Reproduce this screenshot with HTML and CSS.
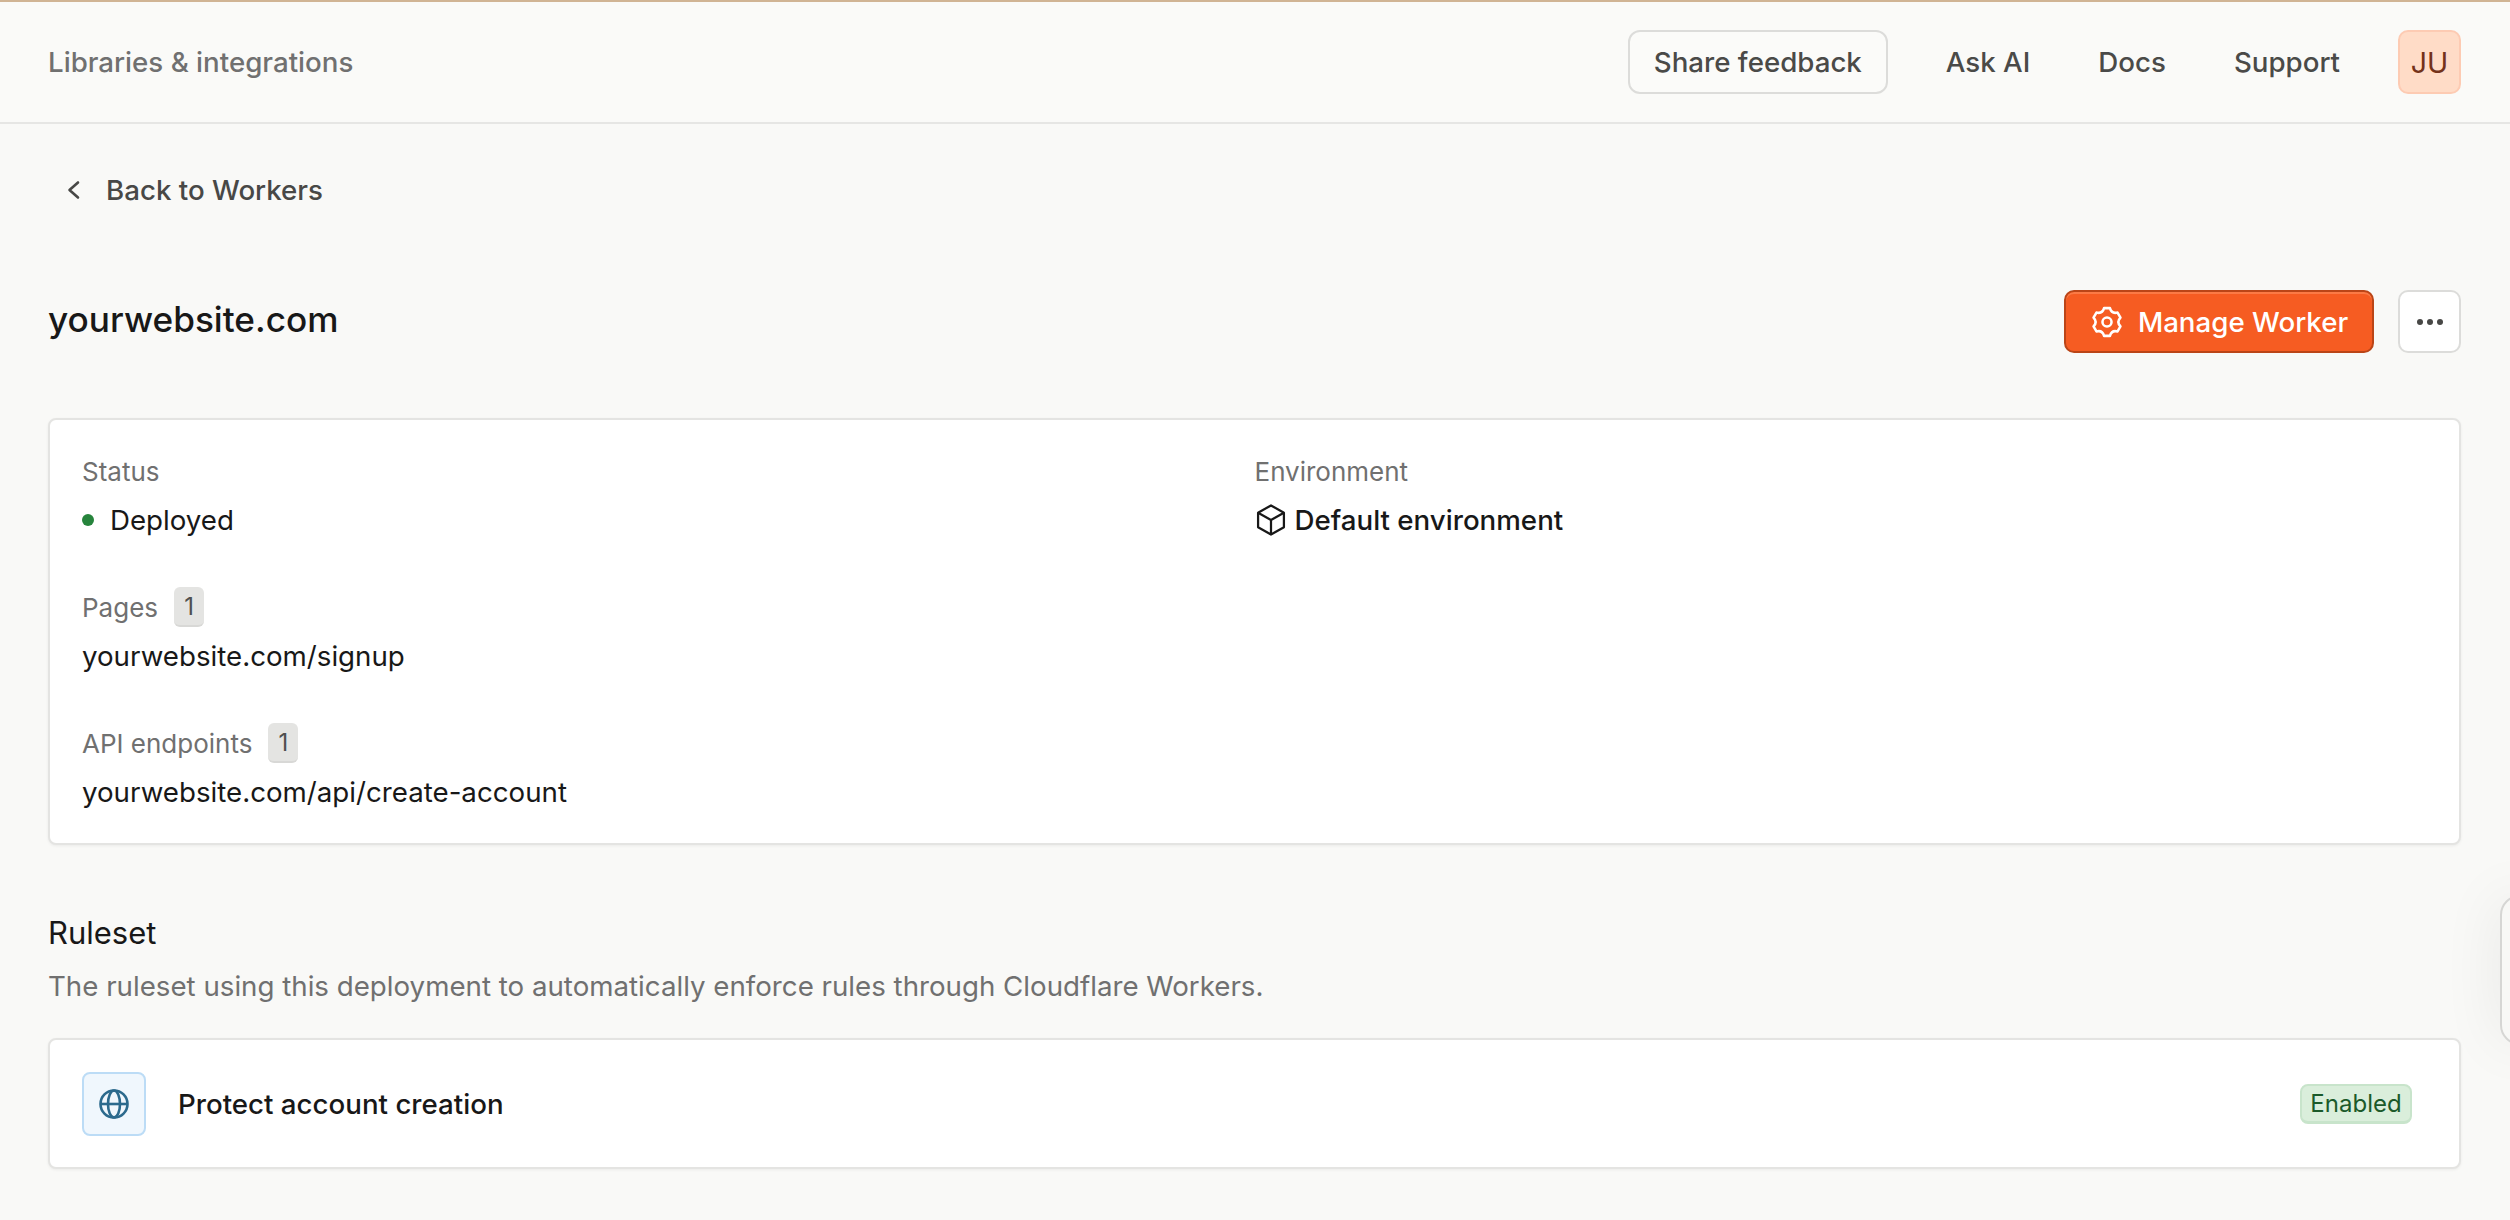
FILE: index.html
```html
<!DOCTYPE html>
<html lang="en">
<head>
<meta charset="utf-8">
<title>yourwebsite.com</title>
<link rel="stylesheet" href="styles.css">
</head>
<body>
<div class="topline"></div>
<header class="topbar">
  <div class="crumb">Libraries &amp; integrations</div>
  <nav class="topnav">
    <button class="feedback">Share feedback</button>
    <a class="navlink">Ask AI</a>
    <a class="navlink">Docs</a>
    <a class="navlink">Support</a>
    <div class="avatar">JU</div>
  </nav>
</header>
<main class="page">
  <a class="back">
    <svg class="back-icon" viewBox="0 0 24 24"><path d="M16 4.5 7.5 12l8.5 7.5"/></svg>
    <span>Back to Workers</span>
  </a>
  <div class="title-row">
    <h1 class="title">yourwebsite.com</h1>
    <div class="actions">
      <button class="primary">
        <svg class="gear" viewBox="0 0 24 24"><path d="M9.92 2.22H14.08Q15.25 6.37 19.43 5.31L21.51 8.91Q18.5 12 21.51 15.09L19.43 18.69Q15.25 17.63 14.08 21.78H9.92Q8.75 17.63 4.57 18.69L2.49 15.09Q5.5 12 2.49 8.91L4.57 5.31Q8.75 6.37 9.92 2.22Z"/><circle cx="12" cy="12" r="3.2"/></svg>
        <span>Manage Worker</span>
      </button>
      <button class="more" aria-label="More"><i></i><i></i><i></i></button>
    </div>
  </div>
  <section class="card details">
    <div class="field">
      <div class="label">Status</div>
      <div class="value"><i class="dot"></i>Deployed</div>
    </div>
    <div class="field">
      <div class="label">Environment</div>
      <div class="value env">
        <svg class="cube" viewBox="26 14 204 228"><path d="M128 24 220 76V180L128 232 36 180V76Z"/><path d="M36 76 128 128 220 76M128 128V232"/></svg>
        Default environment
      </div>
    </div>
    <div class="field full">
      <div class="label">Pages <span class="count">1</span></div>
      <div class="value">yourwebsite.com/signup</div>
    </div>
    <div class="field full">
      <div class="label">API endpoints <span class="count">1</span></div>
      <div class="value">yourwebsite.com/api/create-account</div>
    </div>
  </section>
  <h2 class="section-title">Ruleset</h2>
  <p class="section-desc">The ruleset using this deployment to automatically enforce rules through Cloudflare Workers.</p>
  <section class="card rule">
    <div class="rule-icon">
      <svg viewBox="0 0 32 32"><circle cx="16" cy="16" r="13.5"/><ellipse cx="16" cy="16" rx="6" ry="13.5"/><path d="M2.5 16h27"/></svg>
    </div>
    <div class="rule-name">Protect account creation</div>
    <span class="enabled">Enabled</span>
  </section>
</main>
<div class="widget"></div>
</body>
</html>
```
FILE: styles.css
```css
* { box-sizing: border-box; }
html, body { margin: 0; height: 100%; }
body {
  background: #f9f9f7;
  font-family: Inter, "Liberation Sans", sans-serif;
  font-size: 27.7px;
  color: #181818;
  overflow: hidden;
  position: relative;
}
.topline { height: 2px; background: #d0b494; }
.topbar {
  height: 122px;
  padding: 0 49px 0 48px;
  display: flex;
  align-items: center;
  justify-content: space-between;
  background: #fafaf8;
  border-bottom: 2px solid #e6e6e4;
}
.crumb { color: #707070; font-weight: 450; }
.topnav { display: flex; align-items: center; color: #4a4a48; font-weight: 450; }
.feedback {
  height: 64px;
  width: 260px;
  margin-right: 24px;
  border: 2px solid #dcdcda;
  border-radius: 12px;
  background: #fbfbf9;
  font: inherit;
  color: inherit;
}
.navlink { padding: 0 34px; }
.avatar {
  width: 63px;
  height: 64px;
  margin-left: 24px;
  display: flex;
  align-items: center;
  justify-content: center;
  border: 2px solid #fdcbb3;
  border-radius: 10px;
  background: #ffdcc7;
  color: #74321a;
  font-size: 28.5px;
  font-weight: 400;
}
.page { padding: 0 49px 0 48px; }
.back {
  display: flex;
  align-items: center;
  height: 48px;
  margin-top: 42px;
  color: #484846;
  font-weight: 450;
}
.back-icon {
  width: 24px;
  height: 24px;
  margin: 0 20px 0 14px;
  fill: none;
  stroke: #484846;
  stroke-width: 2.6;
  stroke-linecap: round;
  stroke-linejoin: round;
}
.title-row {
  display: flex;
  justify-content: space-between;
  align-items: flex-start;
  margin-top: 76px;
}
.title {
  margin: 0;
  font-size: 35.2px;
  font-weight: 450;
  line-height: 58px;
}
.actions { display: flex; gap: 24px; }
.primary {
  width: 310px;
  height: 63px;
  display: flex;
  align-items: center;
  justify-content: center;
  gap: 14px;
  border: 2px solid #bb4517;
  border-radius: 10px;
  background: #f65c22;
  box-shadow: inset 0 2px 0 #fb7a45;
  color: #fff;
  font: inherit;
  font-weight: 450;
}
.gear {
  width: 34px;
  height: 34px;
  fill: none;
  stroke: #fff;
  stroke-width: 1.8;
  stroke-linejoin: round;
}
.more {
  width: 63px;
  height: 63px;
  display: flex;
  align-items: center;
  justify-content: center;
  gap: 4px;
  padding: 0;
  border: 2px solid #dcdcda;
  border-radius: 10px;
  background: #fff;
}
.more i { width: 6px; height: 6px; border-radius: 50%; background: #484846; }
.card {
  background: #fff;
  border: 2px solid #e4e4e2;
  border-radius: 8px;
  box-shadow: 0 1px 3px rgba(0, 0, 0, 0.06);
}
.details {
  height: 427px;
  margin-top: 65px;
  padding: 27px 32px;
  display: grid;
  grid-template-columns: 1fr 1fr;
  grid-auto-rows: 96px;
  row-gap: 40px;
}
.full { grid-column: 1 / -1; }
.label { height: 48px; display: flex; align-items: center; gap: 16px; color: #707070; font-size: 26px; }
.value { height: 48px; padding-top: 2px; display: flex; align-items: center; }
.env { font-weight: 450; }
.dot { width: 12px; height: 12px; border-radius: 50%; background: #26843c; margin-right: 16px; }
.cube {
  width: 30px;
  height: 32px;
  margin: 0 9px 0 1px;
  fill: none;
  stroke: #181818;
  stroke-width: 16;
  stroke-linejoin: round;
}
.count {
  width: 30px;
  height: 40px;
  display: flex;
  align-items: center;
  justify-content: center;
  border-radius: 6px;
  background: #e4e4e2;
  border-bottom: 2px solid #d8d8d6;
  color: #4f4f4f;
  font-size: 24px;
}
.section-title {
  margin: 66px 0 0;
  font-size: 31px;
  font-weight: 400;
  line-height: 44px;
}
.section-desc {
  margin: 9px 0 0;
  color: #707070;
  line-height: 44px;
}
.rule {
  height: 131px;
  margin-top: 30px;
  padding: 0 47px 0 32px;
  display: flex;
  align-items: center;
}
.rule-icon {
  width: 64px;
  height: 64px;
  display: flex;
  align-items: center;
  justify-content: center;
  border: 2px solid #bcdcf6;
  border-radius: 8px;
  background: #f0f7fd;
}
.rule-icon svg {
  width: 32px;
  height: 32px;
  fill: none;
  stroke: #2c6a8d;
  stroke-width: 2.6;
}
.rule-name { margin-left: 32px; flex: 1; font-weight: 450; }
.enabled {
  width: 112px;
  height: 40px;
  display: flex;
  align-items: center;
  justify-content: center;
  border: 2px solid #c8e4cb;
  border-bottom-width: 3px;
  border-radius: 8px;
  background: #daeedb;
  color: #1b5a2a;
  font-size: 24px;
}
.widget {
  position: absolute;
  left: 2500px;
  top: 895px;
  width: 40px;
  height: 150px;
  border: 2px solid #d6d6d4;
  border-radius: 22px;
  background: #f8f8f6;
  box-shadow: 0 0 60px rgba(0, 0, 0, 0.08);
}
```
